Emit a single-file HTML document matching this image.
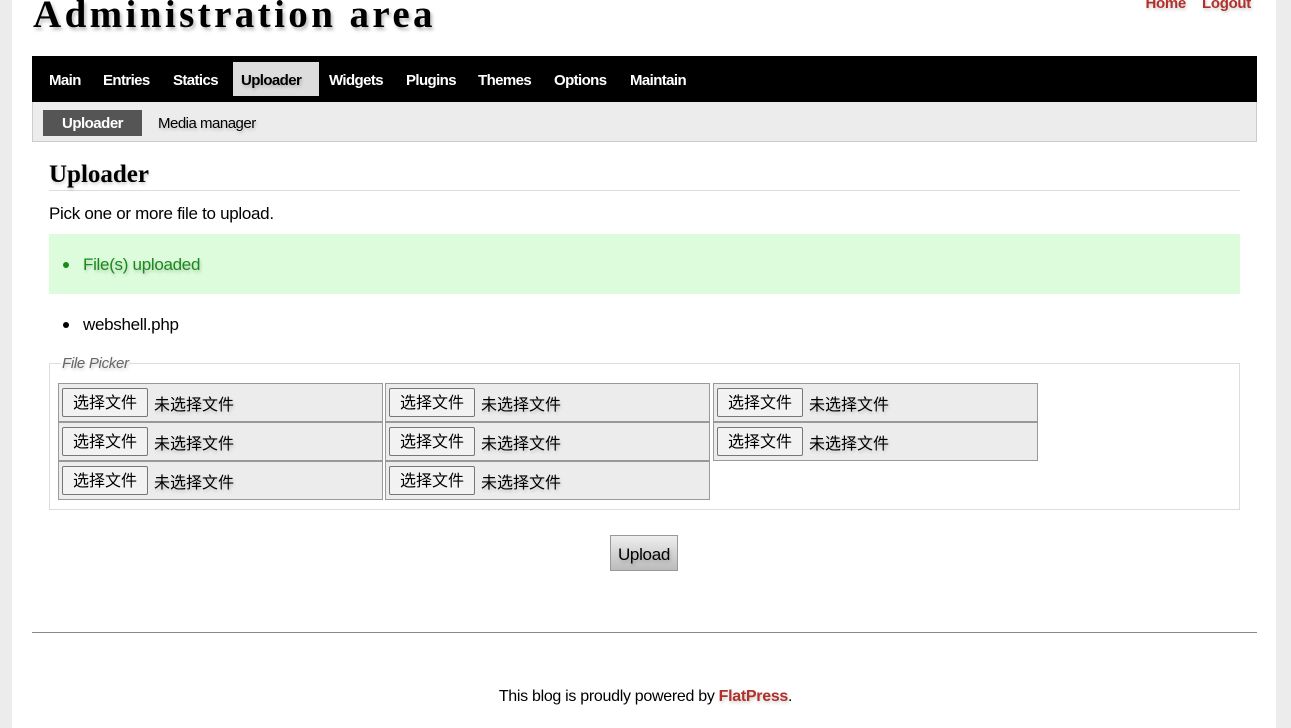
<!DOCTYPE html>
<html><head><meta charset="utf-8"><style>
*{box-sizing:border-box;margin:0;padding:0}
body{width:1291px;height:728px;background:#ececec;font-family:"Liberation Sans","Noto Sans CJK SC",sans-serif;font-size:17px;letter-spacing:-0.3px;color:#000;position:relative;overflow:hidden}
.page{position:absolute;left:12px;top:0;width:1264px;height:728px;background:#fff}
.ts{text-shadow:1px 2px 3px rgba(0,0,0,.2)}
h1{position:absolute;left:33px;top:-8px;font-family:"Liberation Serif",serif;font-size:39px;letter-spacing:3.4px;font-weight:bold;text-shadow:2px 3px 3px rgba(0,0,0,.25)}
.top{position:absolute;top:-5px;right:40px;color:#b0302a;font-weight:bold;font-size:15px}
.top span{margin-left:16px}
.nav{position:absolute;left:32px;top:56px;width:1225px;height:46px;background:#000;font-weight:bold;font-size:15px;letter-spacing:-0.6px}
.nav span{position:absolute;top:6px;height:34px;line-height:38px;color:#fff;padding:0 8px}
.nav .on{background:#ddd;color:#000}
.sub{position:absolute;left:32px;top:102px;width:1225px;height:40px;background:#ececec;border:1px solid #ccc;border-top:none;font-size:15px;letter-spacing:-0.5px}
.sub .a{position:absolute;left:10px;top:8px;width:99px;height:26px;background:#555;color:#fff;font-weight:bold;text-align:center;line-height:28px}
.sub .b{position:absolute;left:125px;top:13px}
h2{position:absolute;left:49px;top:161px;font-family:"Liberation Serif",serif;font-size:25px;font-weight:bold;width:1191px;border-bottom:1px solid #ddd;height:30px;line-height:28px;letter-spacing:0}
.p{position:absolute;left:49px;top:204px}
.ok{position:absolute;left:49px;top:234px;width:1191px;height:60px;background:#dcfcdc;color:#1a8a1a;font-size:17px}
.ok span,.li span{position:absolute;left:34px;top:21px}
.ok i,.li i{position:absolute;left:14px;top:28px;width:6px;height:6px;border-radius:50%;background:currentColor}
.li{position:absolute;left:49px;top:294px;width:600px;height:60px}
fieldset{position:absolute;left:49px;top:363px;width:1191px;height:147px;border:1px solid #ddd}
legend{position:absolute;left:11px;top:-9px;font-style:italic;color:#666;font-size:15px;background:#fff;padding:0 1px}
.c{position:absolute;width:325px;height:39px;background:#ececec;border:1px solid #999;font-size:16px;letter-spacing:0}
.c b{position:absolute;left:3px;top:4px;width:86px;height:29px;border:1px solid #777;border-radius:2px;background:#f2f2f2;font-weight:normal;text-align:center;line-height:29px}
.c em{position:absolute;left:95px;top:7px;font-style:normal}
.up{position:absolute;left:610px;top:535px;width:68px;height:36px;border:1px solid #999;background:linear-gradient(#eee,#bbb);text-align:center;line-height:37px}
.hr{position:absolute;left:32px;top:632px;width:1225px;border-top:1px solid #888}
.f{position:absolute;left:0;width:1291px;top:688px;text-align:center;font-size:16px}
.f a{color:#b0302a;font-weight:bold;text-decoration:none}
</style></head><body>
<div class="page"></div>
<h1>Administration area</h1>
<div class="top ts"><span>Home</span><span>Logout</span></div>
<div class="nav"><span style="left:9px">Main</span><span style="left:63px">Entries</span><span style="left:133px">Statics</span><span class="on ts" style="left:201px;width:86px">Uploader</span><span style="left:289px">Widgets</span><span style="left:366px">Plugins</span><span style="left:438px">Themes</span><span style="left:514px">Options</span><span style="left:590px">Maintain</span></div>
<div class="sub"><div class="a">Uploader</div><div class="b ts">Media manager</div></div>
<h2 class="ts">Uploader</h2>
<div class="p">Pick one or more file to upload.</div>
<div class="ok ts"><i></i><span>File(s) uploaded</span></div>
<div class="li"><i></i><span>webshell.php</span></div>
<fieldset><legend class="ts">File Picker</legend></fieldset>
<div class="c" style="left:58px;top:383px"><b>选择文件</b><em class="ts">未选择文件</em></div>
<div class="c" style="left:385px;top:383px"><b>选择文件</b><em class="ts">未选择文件</em></div>
<div class="c" style="left:713px;top:383px"><b>选择文件</b><em class="ts">未选择文件</em></div>
<div class="c" style="left:58px;top:422px"><b>选择文件</b><em class="ts">未选择文件</em></div>
<div class="c" style="left:385px;top:422px"><b>选择文件</b><em class="ts">未选择文件</em></div>
<div class="c" style="left:713px;top:422px"><b>选择文件</b><em class="ts">未选择文件</em></div>
<div class="c" style="left:58px;top:461px"><b>选择文件</b><em class="ts">未选择文件</em></div>
<div class="c" style="left:385px;top:461px"><b>选择文件</b><em class="ts">未选择文件</em></div>
<div class="up ts">Upload</div>
<div class="hr"></div>
<div class="f">This blog is proudly powered by <a class="ts">FlatPress</a>.</div>
</body></html>
